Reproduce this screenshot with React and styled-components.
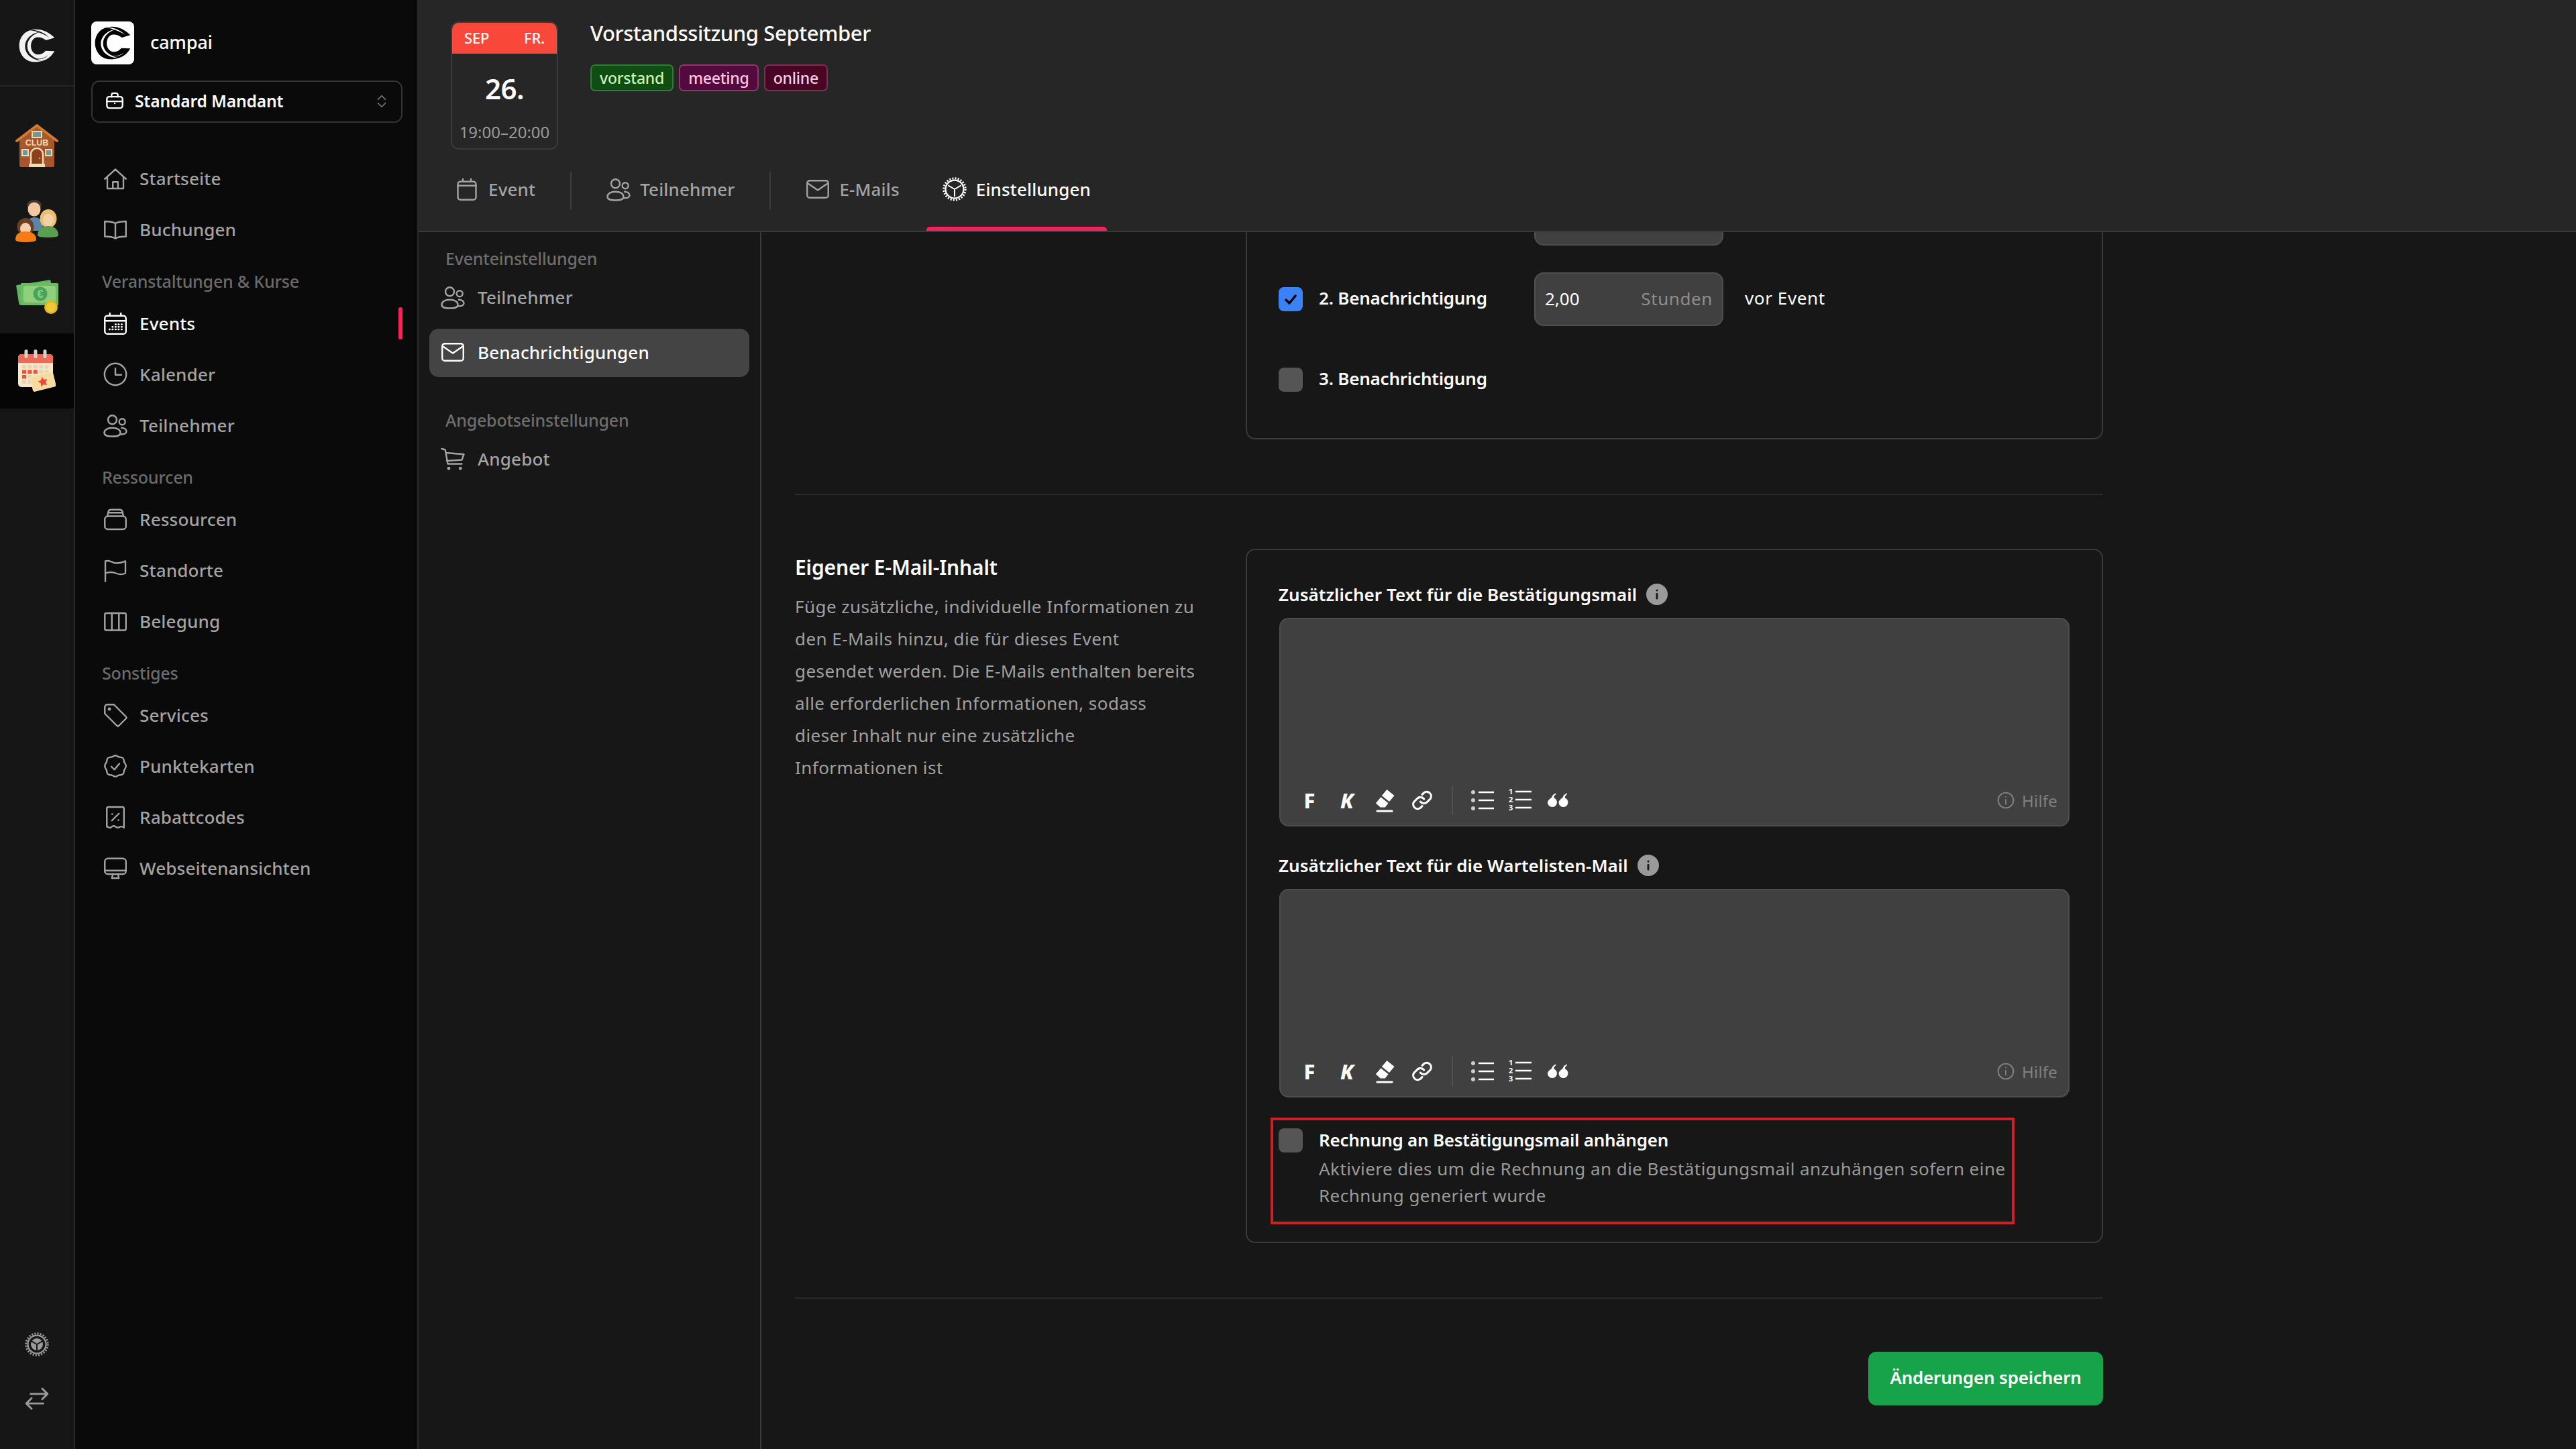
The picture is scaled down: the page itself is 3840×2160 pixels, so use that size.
import React from "react";
import styled, { createGlobalStyle } from "styled-components";

const Global = createGlobalStyle`
  html, body { margin: 0; padding: 0; width: 3840px; height: 2160px; overflow: hidden; background: #171717; }
  body { font-family: "Noto Sans", "Open Sans", sans-serif; }
  * { box-sizing: border-box; }
`;

const Page = styled.div`display: flex; width: 3840px; height: 2160px;`;

/* icon rail */
const Rail = styled.aside`
  width: 112px; flex: none; display: flex; flex-direction: column;
  background: #161616; border-right: 2px solid #2a2a2a;
`;
const RailLogo = styled.div`
  height: 129px; display: flex; align-items: center; justify-content: center;
  border-bottom: 2px solid #262626; margin-bottom: 32px; padding-top: 8px;
`;
const RailItem = styled.div`
  height: 112px; display: flex; align-items: center; justify-content: center;
  background: ${p => (p.$active ? "#050505" : "transparent")};
`;
const RailBottom = styled.div`
  margin-top: auto; display: flex; flex-direction: column; align-items: center; gap: 44px;
  padding-bottom: 56px; color: #9a9a9a;
`;

/* main sidebar */
const Sidebar = styled.nav`
  width: 512px; flex: none; padding: 32px 22px 0 24px;
  background: #0a0a0a; border-right: 2px solid #2a2a2a;
`;
const Brand = styled.div`display: flex; align-items: center; gap: 24px; height: 64px;`;
const BrandBox = styled.div`
  width: 64px; height: 64px; border-radius: 8px; background: #fff;
  display: flex; align-items: center; justify-content: center;
`;
const BrandName = styled.span`color: #fff; font-size: 27px; font-weight: 500; letter-spacing: -0.2px; margin-top: -4px;`;
const TenantSelect = styled.div`
  margin-top: 24px; height: 63px; display: flex; align-items: center; gap: 16px;
  padding: 0 18px 3px 19px; border: 2px solid #333; border-radius: 12px; color: #fff;
`;
const TenantName = styled.span`font-size: 24.5px; font-weight: 600; flex: 1; letter-spacing: -0.1px;`;
const ChevronWrap = styled.span`color: #7d7d7d; display: flex; margin-top: 2px;`;
const SideNav = styled.div`margin-top: 45px; display: flex; flex-direction: column;`;
const SideHeading = styled.div`
  height: 64px; padding: 22px 0 0 16px; line-height: 34px;
  font-size: 25px; font-weight: 500; color: #6b6b6b; letter-spacing: -0.2px;
`;
const SideItem = styled.div`
  height: 76px; display: flex; align-items: center; gap: 18px; padding-left: 18px; position: relative;
  font-size: 26px; font-weight: 500; letter-spacing: 0.2px;
  color: ${p => (p.$active ? "#fff" : "#a3a3a3")};
`;
const ActiveBar = styled.span`
  position: absolute; right: 0; top: 14px; width: 6px; height: 48px; border-radius: 3px; background: #ff2058;
`;

/* main */
const Main = styled.main`flex: 1; display: flex; flex-direction: column; min-width: 0;`;
const TopBar = styled.header`
  height: 346px; flex: none; background: #262626; border-bottom: 2px solid #3a3a3a;
`;
const EventHead = styled.div`display: flex; gap: 48px; padding: 32px 0 0 48px; height: 223px;`;
const DateCard = styled.div`
  width: 160px; height: 191px; border: 2px solid #3a3a3a; border-radius: 12px; overflow: hidden;
  display: flex; flex-direction: column; align-items: center;
`;
const DateTop = styled.div`
  align-self: stretch; margin: -2px -2px 0; height: 48px; background: #f9483a; color: #fff;
  display: flex; align-items: center; justify-content: space-between; padding: 0 20px;
  font-size: 22px; font-weight: 500; letter-spacing: -0.2px;
`;
const DateDay = styled.div`margin-top: 26px; height: 52px; line-height: 52px; font-size: 42px; font-weight: 600; color: #fff; letter-spacing: -0.5px;`;
const DateTime = styled.div`margin-top: 22px; font-size: 24px; line-height: 34px; color: #9a9a9a; letter-spacing: 0; white-space: nowrap;`;
const EventInfo = styled.div`display: flex; flex-direction: column;`;
const EventTitle = styled.h1`margin: -3px 0 0; font-size: 31px; line-height: 40px; font-weight: 500; color: #fff; letter-spacing: -0.4px;`;
const ChipRow = styled.div`display: flex; gap: 8px; margin-top: 27px;`;
const Chip = styled.span`
  height: 40px; padding: 0 12px; display: flex; align-items: center; border-radius: 7px;
  font-size: 23px; font-weight: 500; letter-spacing: -0.2px;
  background: ${p => p.$bg}; border: 2px solid ${p => p.$bd}; color: ${p => p.$fg};
`;
const Tabs = styled.div`display: flex; align-items: center; gap: 16px; height: 121px; padding-left: 30px;`;
const Tab = styled.div`
  height: 121px; padding: 0 24px 3px; display: flex; align-items: center; gap: 14px; position: relative;
  font-size: 26px; font-weight: 500; letter-spacing: 0.15px;
  color: ${p => (p.$active ? "#fff" : "#a3a3a3")};
`;
const TabLine = styled.span`
  position: absolute; left: 0; right: 0; bottom: 0; height: 6px; border-radius: 5px 5px 0 0; background: #f5205c;
`;
const TabSep = styled.span`width: 2px; height: 56px; margin: 0 12px; background: #3d3d3d;`;

const Body = styled.div`flex: 1; display: flex; min-height: 0;`;
const SubNav = styled.div`
  width: 511px; flex: none; padding: 19px 16px 0; background: #171717; border-right: 2px solid #3a3a3a;
`;
const SubHeading = styled.div`
  height: 40px; line-height: 40px; margin: ${p => (p.$next ? "44px" : "0")} 0 3px; padding-left: 24px;
  font-size: 25px; font-weight: 500; color: #6e6e6e; letter-spacing: -0.2px;
`;
const SubItem = styled.div`
  height: 72px; display: flex; align-items: center; gap: 19px; padding: 0 0 2px 17px; border-radius: 14px;
  margin-bottom: 10px; font-size: 26px; font-weight: 500; letter-spacing: 0.2px;
  background: ${p => (p.$active ? "#444" : "transparent")};
  color: ${p => (p.$active ? "#fff" : "#a3a3a3")};
`;
const Content = styled.div`flex: 1; overflow: hidden; padding: 0 0 0 50px; min-width: 0;`;
const Scrolled = styled.div`width: 1950px; margin-top: -150px;`;
const Section = styled.section`display: grid; grid-template-columns: 672px 1278px;`;
const SectionInfo = styled.div`padding-top: 8px;`;
const SectionTitle = styled.h2`margin: 0; font-size: 30px; line-height: 40px; font-weight: 600; color: #fff; letter-spacing: -0.15px;`;
const SectionText = styled.p`margin: 14px 0 0; font-size: 26px; line-height: 48px; color: #a0a0a0; white-space: nowrap; letter-spacing: 0.45px;`;
const Card = styled.div`border: 2px solid #3a3a3a; border-radius: 14px;`;
const NotifyCard = styled(Card)`padding: 88px 0 47px 47px; display: flex; flex-direction: column; gap: 40px;`;
const MailCard = styled(Card)`padding: 46px 48px 26px;`;
const NotifyRow = styled.div`display: flex; align-items: center; height: 80px;`;
const Check = styled.span`
  width: 36px; height: 36px; flex: none; border-radius: 8px; display: flex; align-items: center; justify-content: center;
  background: ${p => (p.$on ? "#3b82f6" : "#555")};
`;
const RowLabel = styled.span`
  width: 321px; margin-left: 24px; flex: none; font-size: 26px; font-weight: 600; color: #fff; letter-spacing: -0.2px; white-space: nowrap;
  padding-bottom: 4px;
`;
const NumberInput = styled.div`
  width: 282px; height: 80px; padding: 0 14px 3px; display: flex; align-items: center; justify-content: space-between;
  background: #404040; border: 2px solid #4f4f4f; border-radius: 14px; font-size: 26px; color: #fff;
  margin-left: ${p => p.$indent || 0}px;
`;
const Unit = styled.span`color: #8d8d8d; letter-spacing: 0.6px;`;
const AfterInput = styled.span`margin-left: 32px; font-size: 26px; color: #fff; font-weight: 400; letter-spacing: 0.6px; padding-bottom: 4px;`;
const FieldLabel = styled.div`
  height: 40px; display: flex; align-items: center; gap: 14px; margin: 0 0 15px -1px;
  font-size: 26px; font-weight: 600; color: #fff; letter-spacing: 0.05px;
`;
const InfoDot = styled.span`
  width: 32px; height: 32px; border-radius: 50%; background: #9a9a9a; color: #1a1a1a;
  display: flex; align-items: center; justify-content: center;
`;
const Editor = styled.div`
  height: 311px; margin-bottom: ${p => (p.$last ? 0 : 38)}px; display: flex; flex-direction: column; justify-content: flex-end;
  background: #404040; border: 2px solid #4d4d4d; border-radius: 14px; padding: 0 16px 15px 15px;
`;
const Toolbar = styled.div`display: flex; align-items: center; height: 44px; color: #fff;`;
const Tool = styled.span`
  width: 56px; height: 44px; display: flex; align-items: center; justify-content: center;
  font-size: 31px; font-weight: 800; font-style: ${p => (p.$italic ? "italic" : "normal")};
`;
const ToolSep = styled.span`width: 2px; height: 44px; margin: 0 16px; background: #505050;`;
const Help = styled.span`
  margin-left: auto; display: flex; align-items: center; gap: 11px; color: #808080; font-size: 24px; letter-spacing: 0.2px;
`;
const InvoiceBox = styled.div`
  margin: 30px 0 0 -13px; width: 1109px; height: 159px; border: 4px solid #cf2028;
  padding: 12px 0 0 8px; display: flex; gap: 24px;
`;
const InvoiceText = styled.div`display: flex; flex-direction: column; white-space: nowrap;`;
const InvoiceTitle = styled.div`margin-top: -1px; line-height: 36px; font-size: 26px; font-weight: 600; color: #fff; letter-spacing: -0.25px;`;
const InvoiceDesc = styled.div`margin-top: 5px; line-height: 40px; font-size: 26px; color: #9a9a9a; letter-spacing: 0.45px;`;
const Rule = styled.hr`margin: ${p => p.$m}; height: 2px; border: 0; background: #2a2a2a;`;
const Footer = styled.div`display: flex; justify-content: flex-end;`;
const SaveButton = styled.button`
  width: 350px; height: 80px; border: 0; border-radius: 12px; background: #16a34a; color: #fff; padding: 0 0 4px;
  font-family: inherit; font-size: 26px; font-weight: 600; letter-spacing: -0.2px;
`;

/* drawings */
const Svg = styled.svg`flex: none; display: block; color: inherit;`;
const Line = ({ size = 36, w = 1.6, children, box = "0 0 24 24" }) => (
  <Svg width={size} height={size} viewBox={box} fill="none" stroke="currentColor" strokeWidth={w} strokeLinecap="round" strokeLinejoin="round">{children}</Svg>
);

const ICONS = {
  house: <path d="M1.500 12.500 12 3l10.500 9.500M4 10.500V22h16V10.500M9.500 22v-6.500h5V22" />,
  book: <path d="M12 6C9.500 4.500 6.500 4 1.500 4v15c5 0 8 .5 10.500 2 2.500-1.500 5.500-2 10.500-2V4c-5 0-8 .5-10.500 2ZM12 6v15" />,
  events: <g><rect x="1.500" y="4.500" width="21" height="18" rx="2.500" /><path d="M1.500 9.500h21M6.500 2v2.500M17.500 2v2.500" /><path d="M6 18h.5M9 18h.5M12 18h.5M15 18h.5M18 18h.5M9 15.500h.5M12 15.500h.5M15 15.500h.5M18 15.500h.5M15 13h.5M12 13h.5M18 13h.5" /></g>,
  clock: <g><circle cx="12" cy="12" r="10.800" /><path d="M12 6v6.500h6" /></g>,
  users: <g><circle cx="9" cy="6.500" r="4.300" /><circle cx="18.800" cy="8.500" r="3" /><path d="M1 19.500c0-3 3.300-5 8-5s8 2 8 5-3.300 3.500-8 3.500-8-.5-8-3.500Z" /><path d="M18 14.500c2.800 0 5 1.500 5 3.500s-2.200 3-5.500 3" /></g>,
  stack: <g><rect x="1.500" y="9" width="21" height="13" rx="3" /><path d="M4 9l1-4.500C5.300 3 6.500 2.500 8 2.500h8c1.500 0 2.700.5 3 2L20 9M5 5.500h14" /></g>,
  flag: <path d="M2 23V3c5-1.500 7 2 11 2s6-1 9-2v12c-3 1.500-6 1.500-9.500 0s-6.500-1.500-10.500 0" />,
  columns: <g><rect x="1.500" y="4" width="21" height="17" rx="1.500" /><path d="M8.500 4v17M15.500 4v17" /></g>,
  tag: <g><path d="M1.500 4A2.500 2.500 0 0 1 4 1.500h6.500l12 12a1.500 1.500 0 0 1 0 2L15.500 22.500a1.500 1.500 0 0 1-2 0L1.500 10.500Z" /><circle cx="6" cy="6" r=".8" /></g>,
  badge: <g><path d="M12 1.500c1.700 0 2.300 1.300 3.700 1.500 1.500.2 2.800 0 3.900 1.200 1.100 1.200.7 2.500 1.200 3.800.5 1.200 1.700 2 1.700 4s-1.200 2.800-1.700 4c-.5 1.300-.1 2.600-1.200 3.800-1.100 1.200-2.400 1-3.900 1.200-1.400.2-2 1.500-3.700 1.500s-2.300-1.300-3.700-1.500c-1.500-.2-2.800 0-3.900-1.200C3.300 18.600 3.700 17.300 3.200 16 2.700 14.800 1.500 14 1.500 12s1.200-2.800 1.700-4c.5-1.300.1-2.600 1.200-3.800C5.500 3 6.800 3.200 8.300 3c1.400-.2 2-1.500 3.700-1.500Z" /><path d="m8 12.500 3 3 5-6" /></g>,
  receipt: <g><path d="M3.500 3.500A1.500 1.500 0 0 1 5 2h14a1.500 1.500 0 0 1 1.500 1.500v19c-2-1.500-3-1.500-4.500-.5s-2.500.5-4-.5-2.500-1-4 .5-2.500 0-4.500-.5Z" /><path d="m8.500 15.500 7-7M8.800 9h.1M15 15h.1" /></g>,
  monitor: <g><rect x="1.500" y="2.500" width="21" height="15.500" rx="3" /><path d="M1.500 14.500h21M9.500 18l-1 4h7l-1-4" /></g>,
  cart: <g><path d="M1 2l3.500 1L7 17h14M5 6l18 1.500L21 13l-15 1" /><circle cx="8" cy="21.500" r=".8" /><circle cx="19.500" cy="21.500" r=".8" /></g>,
  mail: <g><rect x="1.500" y="3.500" width="21" height="17" rx="2.500" /><path d="M2.500 6.500 12 13l9.500-6.500" /></g>,
  brief: <g><rect x="2" y="7" width="20" height="14.500" rx="3" /><path d="M8 7V5a2.500 2.500 0 0 1 2.500-2.500h3A2.500 2.500 0 0 1 16 5v2M2 13h20M12 15.500h.1" /></g>,
  calendar: <g><rect x="3" y="4.500" width="18" height="18" rx="2.500" /><path d="M3 8.500h18M8 2v2.500M16 2v2.500" /></g>,
};
const Icon = ({ name, size = 36, w = 1.6 }) => <Line size={size} w={w}>{ICONS[name]}</Line>;

const Gear = ({ size = 36, filled }) => (
  <Svg width={size} height={size} viewBox="0 0 24 24" fill="none" stroke="currentColor">
    <circle cx="12" cy="12" r="10.800" strokeWidth="2" strokeDasharray="1.400 1.428" />
    <circle cx="12" cy="12" r="9" strokeWidth="1.500" />
    {filled && <circle cx="12" cy="12" r="6" fill="currentColor" stroke="none" />}
    <path d="M12 12 5.500 8.300M12 12l6.500-3.700M12 12v7.500" strokeWidth="1.300" stroke={filled ? "#161616" : "currentColor"} />
  </Svg>
);
const Swap = () => (
  <Line size={38} w={1.800}><path d="M6 7.500h16M17 2.500l5 5-5 5M18 16.500H2M7 11.500l-5 5 5 5" /></Line>
);
const Chevrons = () => (
  <Line size={22} w={1.800}><path d="m6 9 6-6 6 6M6 15l6 6 6-6" /></Line>
);
const Tick = () => (
  <Line size={24} w={3.500}><path d="m5 13 5 5 9-11" /></Line>
);
const Info = ({ size = 26 }) => (
  <Line size={size} w={1.800}><circle cx="12" cy="12" r="10.500" /><path d="M12 11v6M12 7h.1" /></Line>
);
const InfoGlyph = () => (
  <Line size={18} w={4}><path d="M12 4h.1M12 11v9" /></Line>
);
const Eraser = () => (
  <Svg width={34} height={36} viewBox="0 0 24 26" fill="#fff">
    <path d="M14.500 1.500 22.500 8 17 14.500 9 8Z" />
    <path d="M8 9.500 16 16l-3.500 4.500H7.500L2.500 16Z" />
    <rect x="3" y="23.500" width="18" height="2.200" rx="1" />
  </Svg>
);
const Chain = () => <Line size={32} w={2.300}><path d="M10 13.500a5 5 0 0 0 7.500.5l3.500-3.500a5 5 0 0 0-7-7l-2 2" /><path d="M14 10.500a5 5 0 0 0-7.500-.5L3 13.500a5 5 0 0 0 7 7l2-2" /></Line>;
const BulletList = () => (
  <Svg width={36} height={36} viewBox="0 0 36 36" fill="none" stroke="#fff" strokeWidth="2.500">
    <path d="M12 6h23M12 18h23M12 30h23" />
    <circle cx="4" cy="6" r="3" fill="#ccc" stroke="none" /><circle cx="4" cy="18" r="3" fill="#ccc" stroke="none" /><circle cx="4" cy="30" r="3" fill="#ccc" stroke="none" />
  </Svg>
);
const NumberList = () => (
  <Svg width={36} height={44} viewBox="0 -4 36 44" fill="none" stroke="#fff" strokeWidth="2.500">
    <path d="M11 5h24M11 17h24M11 29h24" />
    <g fill="#fff" stroke="none" fontSize="11" fontWeight="700" fontFamily="Noto Sans, sans-serif">
      <text x="1" y="8.500">1</text><text x="1" y="20.500">2</text><text x="1" y="32.500">3</text>
    </g>
  </Svg>
);
const Quote = () => (
  <Svg width={34} height={30} viewBox="0 2 34 24" fill="#fff">
    <path d="M8 10c.6-3 2.500-5 6-6.500l.5 1.500C12 6.500 11 8.500 11.500 10.500a7 7 0 1 1-9.500 7C2 14.500 5 12 8 10Z" />
    <path d="M24.500 10c.6-3 2.500-5 6-6.500l.5 1.500c-2.500 1.500-3.500 3.500-3 5.500a7 7 0 1 1-9.500 7c0-3 3-5.500 6-7.500Z" />
  </Svg>
);
const Logo = ({ w, h, fg, bg }) => (
  <Svg width={w} height={h} viewBox="30 30 162 150">
    <path fill={fg} d="M100 33c32-3 65 12 90 37l-38 11c-15-11-36-19-52-9-20 13-22 53 0 68 15 10 35 5 50-12l40 2c-20 35-55 50-90 48-40 0-68-33-68-73s28-70 68-72Z" />
    <path fill={bg} d="M124 44C88 47 58 76 58 108c0 32 28 62 74 64-36-12-64-32-64-64 0-30 22-53 56-64Z" />
    <path fill={bg} d="M76 36c34-4 68 10 90 33-26-18-58-30-90-33Z" />
    <path fill={bg} d="M100 160c20 8 46 2 62-14-16 20-42 24-62 14Z" />
  </Svg>
);
const Club = () => (
  <Svg width={64} height={66} viewBox="0 0 64 66">
    <path fill="#a9562a" d="M6 24 32 4l26 20v39a2 2 0 0 1-2 2H8a2 2 0 0 1-2-2Z" />
    <path stroke="#8d4521" strokeWidth="1" d="M6 38h52M6 46h52M6 54h52" opacity=".5" />
    <path fill="none" stroke="#cf7c35" strokeWidth="4" strokeLinecap="round" strokeLinejoin="round" d="M2 26 32 3l30 23" />
    <rect x="25" y="12" width="14" height="9" fill="#6f98a0" stroke="#f0d9b0" strokeWidth="2" />
    <text x="32" y="33" textAnchor="middle" fontSize="12.500" fontWeight="800" fill="#f2dcb6" fontFamily="Liberation Sans, sans-serif">CLUB</text>
    <path fill="#8c3f1a" stroke="#f2dcb6" strokeWidth="2.500" d="M23 62V46a9 9 0 0 1 18 0v16Z" />
    <circle cx="36" cy="52" r="1.300" fill="#f0a030" />
    <rect x="10" y="39" width="9" height="9" fill="#6f98a0" stroke="#f0d9b0" strokeWidth="2" />
    <rect x="45" y="39" width="9" height="9" fill="#6f98a0" stroke="#f0d9b0" strokeWidth="2" />
    <rect x="20" y="60" width="24" height="5" fill="#f2dcb6" />
  </Svg>
);
const People = () => (
  <Svg width={64} height={64} viewBox="10 128 64 64">
    <path fill="#5b86a8" d="M25 175c0-15 6-20 14-20s12 6 12 20Z" />
    <ellipse cx="38" cy="137" rx="11" ry="8" fill="#46372f" />
    <ellipse cx="38" cy="143" rx="9.500" ry="10.500" fill="#f2c8a0" />
    <ellipse cx="59" cy="157" rx="12.500" ry="14" fill="#e8c070" />
    <ellipse cx="59" cy="159" rx="8" ry="9.500" fill="#f5cfa5" />
    <path fill="#5a9e52" d="M43 182c0-10 8-14 16-14s15 4 15 14c0 2-6 3-15 3s-16-1-16-3Z" />
    <ellipse cx="25" cy="169" rx="12.500" ry="13" fill="#6a3f2a" />
    <ellipse cx="25" cy="172" rx="8" ry="9" fill="#f5cfa5" />
    <path fill="#f57c12" d="M10 188c0-9 7-12 15-12s16 3 16 12c0 3-7 4-16 4s-15-1-15-4Z" />
  </Svg>
);
const Money = () => (
  <Svg width={64} height={56} viewBox="0 0 64 56">
    <rect x="3" y="8" width="52" height="30" rx="1.500" fill="#5fb560" transform="rotate(-9 29 23)" />
    <rect x="8" y="9" width="56" height="33" rx="1.500" fill="#6dba62" />
    <rect x="12" y="13" width="48" height="25" rx="4" fill="#8ed07e" />
    <circle cx="37" cy="25" r="10.500" fill="#4aa35a" />
    <text x="37" y="31" textAnchor="middle" fontSize="16" fontWeight="700" fill="#8ed07e" fontFamily="Liberation Sans, sans-serif">€</text>
    <circle cx="53" cy="45" r="10" fill="#e6b820" />
    <circle cx="53" cy="45" r="7" fill="#f0c93a" />
  </Svg>
);
const CalendarArt = () => {
  const cells = [];
  for (let r = 0; r < 4; r++) for (let c = 0; c < 5; c++) {
    const red = r === 1 ? c < 3 : r === 2 ? c < 1 : false;
    cells.push(<rect key={`${r}-${c}`} x={6 + c * 8.400} y={23 + r * 7.500} width="6" height="5.500" fill={red ? "#e9543f" : "#e5d5b5"} />);
  }
  return (
    <Svg width={56} height={64} viewBox="0 0 56 64">
      <rect y="7" width="52" height="49" rx="5" fill="#fbe7c6" />
      <path fill="#ec6a58" d="M0 20v-8a5 5 0 0 1 5-5h42a5 5 0 0 1 5 5v8Z" />
      {[12, 26, 40].map(x => <rect key={x} x={x - 2.500} y="0" width="5" height="13" rx="2.500" fill="#d7d2c8" />)}
      {cells}
      <g transform="rotate(-14 36 48)">
        <rect x="20" y="37" width="34" height="22" rx="2" fill="#f9dc9c" stroke="#f3e3bd" strokeWidth="1.500" />
        <path fill="#e9483a" d="m37 41 2.200 4.500 5 .7-3.600 3.500.9 5-4.500-2.400-4.500 2.400.9-5-3.600-3.500 5-.7Z" />
      </g>
    </Svg>
  );
};

const Toolset = () => (
  <Toolbar>
    <Tool>F</Tool>
    <Tool $italic>K</Tool>
    <Tool><Eraser /></Tool>
    <Tool><Chain /></Tool>
    <ToolSep />
    <Tool><BulletList /></Tool>
    <Tool><NumberList /></Tool>
    <Tool><Quote /></Tool>
    <Help><Info />Hilfe</Help>
  </Toolbar>
);

const NAV = [
  { icon: "house", label: "Startseite" },
  { icon: "book", label: "Buchungen" },
  { heading: "Veranstaltungen & Kurse" },
  { icon: "events", label: "Events", active: true },
  { icon: "clock", label: "Kalender" },
  { icon: "users", label: "Teilnehmer" },
  { heading: "Ressourcen" },
  { icon: "stack", label: "Ressourcen" },
  { icon: "flag", label: "Standorte" },
  { icon: "columns", label: "Belegung" },
  { heading: "Sonstiges" },
  { icon: "tag", label: "Services" },
  { icon: "badge", label: "Punktekarten" },
  { icon: "receipt", label: "Rabattcodes" },
  { icon: "monitor", label: "Webseitenansichten" },
];

export default function App() {
  return (
    <Page>
      <Global />
      <Rail>
        <RailLogo><Logo w={54} h={56} fg="#f2f2f2" bg="#161616" /></RailLogo>
        <RailItem><Club /></RailItem>
        <RailItem><People /></RailItem>
        <RailItem><Money /></RailItem>
        <RailItem $active><CalendarArt /></RailItem>
        <RailBottom><Gear filled /><Swap /></RailBottom>
      </Rail>

      <Sidebar>
        <Brand>
          <BrandBox><Logo w={54} h={52} fg="#000" bg="#fff" /></BrandBox>
          <BrandName>campai</BrandName>
        </Brand>
        <TenantSelect>
          <Icon name="brief" size={28} w={2} />
          <TenantName>Standard Mandant</TenantName>
          <ChevronWrap><Chevrons /></ChevronWrap>
        </TenantSelect>
        <SideNav>
          {NAV.map((n, i) => n.heading
            ? <SideHeading key={i}>{n.heading}</SideHeading>
            : (
              <SideItem key={i} $active={n.active}>
                <Icon name={n.icon} />
                {n.label}
                {n.active && <ActiveBar />}
              </SideItem>
            ))}
        </SideNav>
      </Sidebar>

      <Main>
        <TopBar>
          <EventHead>
            <DateCard>
              <DateTop><span>SEP</span><span>FR.</span></DateTop>
              <DateDay>26.</DateDay>
              <DateTime>19:00–20:00</DateTime>
            </DateCard>
            <EventInfo>
              <EventTitle>Vorstandssitzung September</EventTitle>
              <ChipRow>
                <Chip $bg="#0f4d12" $bd="#2f7a35" $fg="#c4f5bc">vorstand</Chip>
                <Chip $bg="#550a3e" $bd="#8a3a6a" $fg="#ffc4e8">meeting</Chip>
                <Chip $bg="#4a0525" $bd="#7a3050" $fg="#ffccdc">online</Chip>
              </ChipRow>
            </EventInfo>
          </EventHead>
          <Tabs>
            <Tab><Icon name="calendar" />Event</Tab>
            <TabSep />
            <Tab><Icon name="users" />Teilnehmer</Tab>
            <TabSep />
            <Tab><Icon name="mail" />E-Mails</Tab>
            <Tab $active><Gear />Einstellungen<TabLine /></Tab>
          </Tabs>
        </TopBar>

        <Body>
          <SubNav>
            <SubHeading>Eventeinstellungen</SubHeading>
            <SubItem><Icon name="users" />Teilnehmer</SubItem>
            <SubItem $active><Icon name="mail" />Benachrichtigungen</SubItem>
            <SubHeading $next>Angebotseinstellungen</SubHeading>
            <SubItem><Icon name="cart" />Angebot</SubItem>
          </SubNav>

          <Content>
            <Scrolled>
              <Section>
                <div />
                <NotifyCard>
                  <NotifyRow><NumberInput $indent={381} /></NotifyRow>
                  <NotifyRow>
                    <Check $on><Tick /></Check>
                    <RowLabel>2. Benachrichtigung</RowLabel>
                    <NumberInput><span>2,00</span><Unit>Stunden</Unit></NumberInput>
                    <AfterInput>vor Event</AfterInput>
                  </NotifyRow>
                  <NotifyRow>
                    <Check />
                    <RowLabel>3. Benachrichtigung</RowLabel>
                  </NotifyRow>
                </NotifyCard>
              </Section>
              <Rule $m="81px 0 80px" />
              <Section>
                <SectionInfo>
                  <SectionTitle>Eigener E-Mail-Inhalt</SectionTitle>
                  <SectionText>
                    Füge zusätzliche, individuelle Informationen zu<br />
                    den E-Mails hinzu, die für dieses Event<br />
                    gesendet werden. Die E-Mails enthalten bereits<br />
                    alle erforderlichen Informationen, sodass<br />
                    dieser Inhalt nur eine zusätzliche<br />
                    Informationen ist
                  </SectionText>
                </SectionInfo>
                <MailCard>
                  <FieldLabel>Zusätzlicher Text für die Bestätigungsmail<InfoDot><InfoGlyph /></InfoDot></FieldLabel>
                  <Editor><Toolset /></Editor>
                  <FieldLabel>Zusätzlicher Text für die Wartelisten-Mail<InfoDot><InfoGlyph /></InfoDot></FieldLabel>
                  <Editor $last><Toolset /></Editor>
                  <InvoiceBox>
                    <Check />
                    <InvoiceText>
                      <InvoiceTitle>Rechnung an Bestätigungsmail anhängen</InvoiceTitle>
                      <InvoiceDesc>
                        Aktiviere dies um die Rechnung an die Bestätigungsmail anzuhängen sofern eine<br />
                        Rechnung generiert wurde
                      </InvoiceDesc>
                    </InvoiceText>
                  </InvoiceBox>
                </MailCard>
              </Section>
              <Rule $m="81px 0 79px" />
              <Footer><SaveButton>Änderungen speichern</SaveButton></Footer>
            </Scrolled>
          </Content>
        </Body>
      </Main>
    </Page>
  );
}
